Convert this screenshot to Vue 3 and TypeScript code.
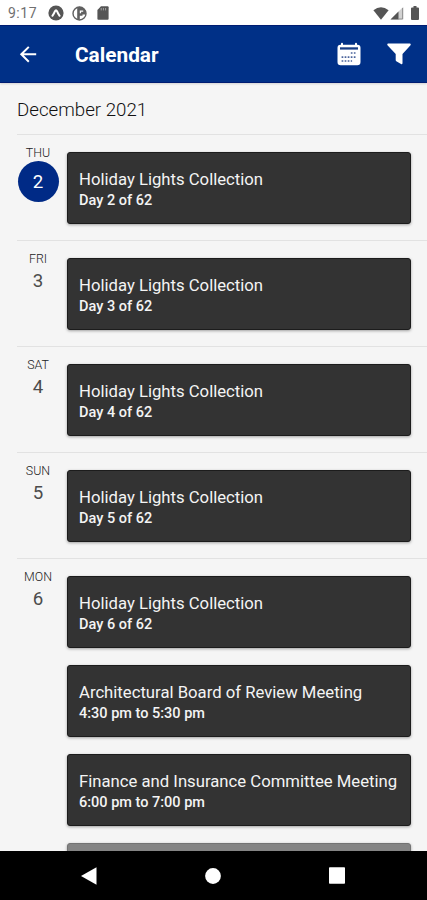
<script setup lang="ts">
interface CalendarEvent {
  title: string
  detail: string
  muted?: boolean
}

interface Day {
  weekday: string
  date: number
  today?: boolean
  events: CalendarEvent[]
}

const holiday = (date: number): CalendarEvent => ({
  title: 'Holiday Lights Collection',
  detail: `Day ${date} of 62`,
})

const days: Day[] = [
  { weekday: 'THU', date: 2, today: true, events: [holiday(2)] },
  { weekday: 'FRI', date: 3, events: [holiday(3)] },
  { weekday: 'SAT', date: 4, events: [holiday(4)] },
  { weekday: 'SUN', date: 5, events: [holiday(5)] },
  {
    weekday: 'MON',
    date: 6,
    events: [
      holiday(6),
      { title: 'Architectural Board of Review Meeting', detail: '4:30 pm to 5:30 pm' },
      { title: 'Finance and Insurance Committee Meeting', detail: '6:00 pm to 7:00 pm' },
      { title: '', detail: '', muted: true },
    ],
  },
]
</script>

<template>
  <div class="screen">
    <div class="status">
      <span class="time">9:17</span>
      <svg class="s-icon" width="16" height="16" viewBox="0 0 16 16">
        <circle cx="8" cy="8" r="7.6" fill="#555" />
        <path d="M4.4 10.8Q6 8.8 7 6.2 8 4.2 9 6.2 10 8.8 11.6 10.8" fill="none" stroke="#fff" stroke-width="2" stroke-linecap="round" />
      </svg>
      <svg class="s-icon second" width="15" height="15" viewBox="0 0 15 15">
        <circle cx="7.5" cy="7.5" r="6.5" fill="#fff" stroke="#606060" stroke-width="1.4" />
        <path d="M5.2 1.3A6.5 6.5 0 0 1 13.8 8.6H10.500V9.800H7.800V13.800H5.200Z" fill="#606060" />
        <path d="M7.8 4.4h3.4v1.3H9.1v1.5H7.8Z" fill="#fff" />
      </svg>
      <svg class="s-icon third" width="12" height="14" viewBox="0 0 12 14">
        <path d="M4 .3h6.6q1 0 1 1v11.4q0 1-1 1H1.4q-1 0-1-1V4Z" fill="#555" />
        <path d="M4.2 2v2.4M6.4 2v2.4M8.6 2v2.4" stroke="#aaa" stroke-width=".9" />
      </svg>
      <div class="signals">
        <svg width="16" height="13" viewBox="0 0 16 13">
          <path d="M.4 3.2Q8-2.6 15.6 3.2L8 12.7Z" fill="#555" />
        </svg>
        <svg width="14" height="14" viewBox="0 0 14 14">
          <path d="M.5 13.5 13.3.7V13.5Z" fill="#d2d2d2" />
          <path d="M.5 13.5 8.5 5.5V13.5Z" fill="#555" />
          <path d="M12.6 2V13H8" fill="none" stroke="#888" stroke-width=".9" />
        </svg>
        <svg class="battery" width="8" height="14" viewBox="0 0 8 14">
          <path d="M2.5 0h3v1.4H7q1 0 1 1V13q0 1-1 1H1q-1 0-1-1V2.4q0-1 1-1h1.5Z" fill="#555" />
        </svg>
      </div>
    </div>

    <header class="bar">
      <svg class="back" width="18" height="18" viewBox="0 0 18 18">
        <path d="M17.2 9.3H2.5M9.8 1.9 2.3 9.3 9.8 16.7" fill="none" stroke="#fff" stroke-width="2" />
      </svg>
      <h1>Calendar</h1>
      <svg class="cal" width="24" height="24" viewBox="0 0 24 24">
        <path d="M5 0.8q1 0 1 1v1h12v-1q0-1 1-1t1 1v1h.5Q23.5 2.8 23.5 5.8V20q0 3.2-3.2 3.2H3.7Q.5 23.2.5 20V5.8Q.5 2.8 3.5 2.8H4v-1q0-1 1-1Z" fill="#fff" />
        <path d="M3 5.3h18v2.3H3Z" fill="#183d85" />
        <path d="M13.8 11h4.7M4.6 15.2h13.9M4.6 19h10.5" stroke="#4a639b" stroke-width="1.7" stroke-dasharray="1.7 1.35" />
      </svg>
      <svg class="funnel" width="24" height="22" viewBox="0 0 24 22">
        <path d="M.9.5H23.1Q24.3 1.3 23.3 2.5L15.5 11V20.2Q15.3 21.7 14 21.1L9.3 18.3Q8.7 17.9 8.7 17V11L.7 2.5Q-.3 1.3.9.5Z" fill="#fff" />
      </svg>
    </header>

    <main class="agenda">
      <h2>December 2021</h2>
      <section v-for="day in days" :key="day.date" class="day">
        <div class="date">
          <span class="weekday">{{ day.weekday }}</span>
          <span class="number" :class="{ today: day.today }">{{ day.date }}</span>
        </div>
        <div class="events">
          <article v-for="(event, i) in day.events" :key="i" class="card" :class="{ muted: event.muted }">
            <div class="title">{{ event.title }}</div>
            <div class="detail">{{ event.detail }}</div>
          </article>
        </div>
      </section>
    </main>

    <nav class="nav">
      <svg width="16" height="18" viewBox="0 0 16 18"><path d="M15.500.3V17.700L0 9Z" fill="#fff" /></svg>
      <svg width="16" height="16" viewBox="0 0 16 16"><circle cx="8" cy="8" r="7.9" fill="#fff" /></svg>
      <svg width="16" height="17" viewBox="0 0 16 17"><rect x="0" y=".3" width="16" height="16.4" rx=".8" fill="#fff" /></svg>
    </nav>
  </div>
</template>

<style>
body {
  margin: 0;
  overflow: hidden;
}
</style>

<style scoped>
.screen {
  display: flex;
  flex-direction: column;
  width: 427px;
  height: 900px;
  overflow: hidden;
  background: #f5f5f5;
  font-family: Roboto, sans-serif;
}

.status {
  flex: none;
  display: flex;
  align-items: center;
  box-sizing: border-box;
  height: 25px;
  padding: 1px 8px 0;
  background: #fff;
}

.time {
  width: 40px;
  font-size: 14px;
  letter-spacing: 0.5px;
  color: #707070;
}

.second {
  margin-left: 8px;
}

.third {
  margin-left: 10px;
}

.signals {
  display: flex;
  align-items: center;
  gap: 1px;
  margin-left: auto;
}

.battery {
  margin-left: 6px;
}

.bar {
  flex: none;
  display: flex;
  align-items: center;
  box-sizing: border-box;
  height: 58px;
  padding: 0 16px 0 19px;
  background: #003087;
  border-top: 1px solid #001c72;
  border-bottom: 1px solid #001c72;
  box-shadow: 0 1px 2px rgba(0, 0, 0, 0.15);
}

h1 {
  flex: 1;
  margin: 2px 0 0 38px;
  font-size: 20.8px;
  font-weight: 700;
  line-height: 24px;
  color: #fff;
}

.funnel {
  margin-left: 26px;
}

.agenda {
  flex: 1;
  min-height: 0;
  overflow: hidden;
}

h2 {
  box-sizing: border-box;
  height: 51px;
  margin: 0;
  padding: 16px 0 0 17px;
  font-size: 18.7px;
  font-weight: 300;
  line-height: 22px;
  color: #111;
}

.day {
  display: flex;
  box-sizing: border-box;
  min-height: 106px;
  margin-left: 17px;
  border-top: 1px solid #e2e2e2;
}

.date {
  display: flex;
  flex-direction: column;
  align-items: center;
  width: 42px;
  padding-top: 11px;
}

.weekday {
  height: 15px;
  font-size: 12.4px;
  font-weight: 300;
  line-height: 14px;
  color: #222;
}

.number {
  width: 41px;
  height: 28px;
  font-size: 18.7px;
  font-weight: 400;
  line-height: 28px;
  text-align: center;
  color: #4c4c4c;
}

.number.today {
  height: 41px;
  border-radius: 50%;
  line-height: 42px;
  background: #002a86;
  color: #fff;
}

.events {
  display: flex;
  flex-direction: column;
  gap: 17.5px;
  width: 344px;
  padding: 17px 0 0 8px;
}

.card {
  flex: none;
  box-sizing: border-box;
  height: 71.5px;
  padding: 16px 11px 0;
  border: 1px solid #1c1c1c;
  border-radius: 3px;
  background: #333;
  box-shadow: 0 1px 3px rgba(0, 0, 0, 0.35);
  color: #f4f4f4;
  white-space: nowrap;
}

.card.muted {
  background: #848484;
  border-color: #737373;
}

.title {
  font-size: 16.7px;
  line-height: 21px;
}

.detail {
  font-size: 14.5px;
  font-weight: 500;
  line-height: 21px;
}

.nav {
  flex: none;
  display: flex;
  align-items: center;
  justify-content: space-between;
  box-sizing: border-box;
  height: 49px;
  padding: 0 82px 0 81px;
  background: #000;
}
</style>
